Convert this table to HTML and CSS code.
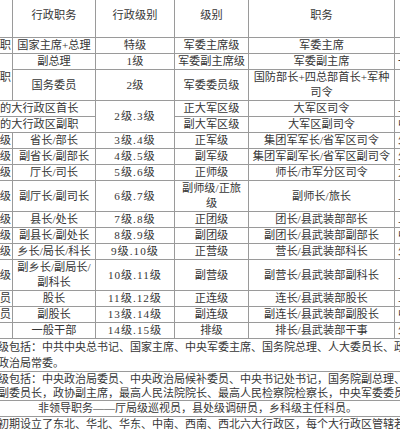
FILE: index.html
```html
<!DOCTYPE html>
<html lang="zh-CN">
<head>
<meta charset="utf-8">
<title>行政职务与军队职务级别对照</title>
<link rel="stylesheet" href="styles.css">
</head>
<body>
<div class="sheet">
  <table class="grade">
    <colgroup>
      <col class="c0"><col class="c1"><col class="c2"><col class="c3"><col class="c4"><col class="c5">
    </colgroup>
    <thead>
      <tr><th>级别</th><th>行政职务</th><th>行政级别</th><th>级别</th><th>职务</th><th>军衔</th></tr>
    </thead>
    <tbody>
      <tr><td class="lead">国家正职</td><td>国家主席+总理</td><td>特级</td><td>军委主席级</td><td>军委主席</td><td class="tail"></td></tr>
      <tr><td class="lead" rowspan="2">国家副职</td><td>副总理</td><td>1级</td><td>军委副主席级</td><td>军委副主席</td><td class="tail">一级上将</td></tr>
      <tr><td>国务委员</td><td>2级</td><td>军委委员级</td><td>国防部长+四总部首长+军种<br>司令</td><td class="tail"></td></tr>
      <tr><td colspan="2">初期的大行政区首长</td><td class="grade-no" rowspan="2">2级.3级</td><td>正大军区级</td><td>大军区司令</td><td class="tail">上将</td></tr>
      <tr><td colspan="2">初期的大行政区副职</td><td>副大军区级</td><td>大军区副司令</td><td class="tail">中将</td></tr>
      <tr><td class="lead">正部级</td><td>省长/部长</td><td class="grade-no">3级.4级</td><td>正军级</td><td>集团军军长/省军区司令</td><td class="tail">少将</td></tr>
      <tr><td class="lead">副部级</td><td>副省长/副部长</td><td class="grade-no">4级.5级</td><td>副军级</td><td>集团军副军长/省军区副司令</td><td class="tail">少将</td></tr>
      <tr><td class="lead">正厅级</td><td>厅长/司长</td><td class="grade-no">5级.6级</td><td>正师级</td><td>师长/市军分区司令</td><td class="tail">大校</td></tr>
      <tr><td class="lead">副厅级</td><td>副厅长/副司长</td><td class="grade-no">6级.7级</td><td>副师级/正旅<br>级</td><td>副师长/旅长</td><td class="tail">上校</td></tr>
      <tr><td class="lead">正处级</td><td>县长/处长</td><td class="grade-no">7级.8级</td><td>正团级</td><td>团长/县武装部部长</td><td class="tail">上校</td></tr>
      <tr><td class="lead">副处级</td><td>副县长/副处长</td><td class="grade-no">8级.9级</td><td>副团级</td><td>副团长/县武装部副部长</td><td class="tail">中校</td></tr>
      <tr><td class="lead">正科级</td><td>乡长/局长/科长</td><td class="grade-no">9级.10级</td><td>正营级</td><td>营长/县武装部科长</td><td class="tail">少校</td></tr>
      <tr><td class="lead">副科级</td><td>副乡长/副局长/<br>副科长</td><td class="grade-no">10级.11级</td><td>副营级</td><td>副营长/县武装部副科长</td><td class="tail">上尉</td></tr>
      <tr><td class="lead">科员</td><td>股长</td><td class="grade-no">11级.12级</td><td>正连级</td><td>连长/县武装部股长</td><td class="tail">上尉</td></tr>
      <tr><td class="lead">办事员</td><td>副股长</td><td class="grade-no">13级.14级</td><td>副连级</td><td>副连长/县武装部副股长</td><td class="tail">中尉</td></tr>
      <tr><td class="lead"></td><td>一般干部</td><td class="grade-no">14级.15级</td><td>排级</td><td>排长/县武装部干事</td><td class="tail">少尉</td></tr>
      <tr class="note note-a"><td colspan="6">级包括：中共中央总书记、国家主席、中央军委主席、国务院总理、人大委员长、政协主席、中央<br>政治局常委。</td></tr>
      <tr class="note note-b"><td colspan="6">级包括：中央政治局委员、中央政治局候补委员、中央书记处书记，国务院副总理、国务委员，全国人大常委会<br>副委员长，政协副主席，最高人民法院院长、最高人民检察院检察长，中央军委委员。</td></tr>
      <tr class="note note-c"><td colspan="6">非领导职务——厅局级巡视员，县处级调研员，乡科级主任科员。</td></tr>
      <tr class="note note-d"><td colspan="6">初期设立了东北、华北、华东、中南、西南、西北六大行政区，每个大行政区管辖若干省市。</td></tr>
    </tbody>
  </table>
</div>
</body>
</html>
```
FILE: styles.css
```css
html, body {
  margin: 0;
  padding: 0;
  background: #ffffff;
}

.sheet {
  width: 400px;
  height: 430px;
  overflow: hidden;
}

.grade {
  border-collapse: collapse;
  table-layout: fixed;
  width: 494px;
  margin: -7px 0 0 -40px;
  font-family: "Liberation Serif", "Noto Sans CJK SC", serif;
  font-size: 11.2px;
  line-height: 15px;
  color: #363636;
}

.c0 { width: 52px; }
.c1 { width: 83px; }
.c2 { width: 79px; }
.c3 { width: 74px; }
.c4 { width: 146px; }
.c5 { width: 60px; }

.grade th,
.grade td {
  border: 1px solid #9a9a9a;
  padding: 0 2px;
  text-align: center;
  vertical-align: middle;
  white-space: nowrap;
  overflow: hidden;
}

.grade th {
  height: 43px;
  font-weight: normal;
}

.grade td.lead {
  text-align: right;
  padding-right: 1px;
}

.grade td.tail {
  text-align: left;
  padding-left: 3px;
}

.grade td.grade-no {
  letter-spacing: 1px;
}

.note td {
  text-align: left;
  font-size: 11px;
  padding: 0 0 0 37px;
}

.note-a td { line-height: 16px; }
.note-b td { line-height: 14px; }
.note-c td { padding-left: 77px; }
.note-d td { line-height: 14px; }
```
